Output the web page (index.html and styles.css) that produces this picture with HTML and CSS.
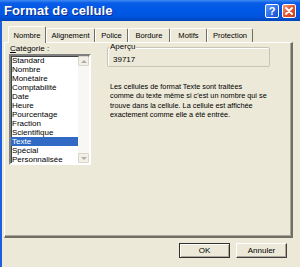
FILE: index.html
```html
<!DOCTYPE html>
<html lang="fr">
<head>
    <meta charset="UTF-8">
    <title>Format de cellule</title>
    <link rel="stylesheet" href="styles.css">
</head>
<body>
    <div class="window">
        <div class="titlebar">
            <span class="title">Format de cellule</span>
            <div class="caption-btns">
                <span class="cbtn help">?</span>
                <span class="cbtn close">
                    <svg width="8" height="8" viewBox="0 0 8 8"><path d="M1 1 L7 7 M7 1 L1 7" stroke="#fff" stroke-width="1.8" stroke-linecap="round"/></svg>
                </span>
            </div>
        </div>
        <div class="body">
            <div class="tabs">
                <span class="tab selected">Nombre</span>
                <span class="tab w-align">Alignement</span>
                <span class="tab w-police">Police</span>
                <span class="tab w-bordure">Bordure</span>
                <span class="tab w-motifs">Motifs</span>
                <span class="tab w-protect">Protection</span>
            </div>
            <div class="panel">
                <div class="col-left">
                    <div class="label"><u>C</u>atégorie :</div>
                    <div class="listbox">
                        <ul class="items">
                            <li>Standard</li>
                            <li>Nombre</li>
                            <li>Monétaire</li>
                            <li>Comptabilité</li>
                            <li>Date</li>
                            <li>Heure</li>
                            <li>Pourcentage</li>
                            <li>Fraction</li>
                            <li>Scientifique</li>
                            <li class="sel">Texte</li>
                            <li>Spécial</li>
                            <li>Personnalisée</li>
                        </ul>
                        <div class="vscroll">
                            <span class="sbtn"><span class="arrow up"></span></span>
                            <span class="track"></span>
                            <span class="sbtn"><span class="arrow down"></span></span>
                        </div>
                    </div>
                </div>
                <div class="col-right">
                    <fieldset class="group">
                        <legend>Aperçu</legend>
                        <div class="preview">39717</div>
                    </fieldset>
                    <p class="desc">Les cellules de format Texte sont traitées<br>comme du texte même si c'est un nombre qui se<br>trouve dans la cellule. La cellule est affichée<br>exactement comme elle a été entrée.</p>
                </div>
            </div>
            <div class="actions">
                <span class="btn default">OK</span>
                <span class="btn">Annuler</span>
            </div>
        </div>
    </div>
</body>
</html>
```

FILE: styles.css
```css
body {
    margin: 0;
    padding: 0;
    width: 300px;
    height: 267px;
    overflow: hidden;
    background: #ece9d8;
    font-family: "Liberation Sans", Arial, sans-serif;
    font-size: 8px;
    color: #000;
}

.window {
    width: 300px;
    height: 267px;
    display: flex;
    flex-direction: column;
}

/* barre de titre */
.titlebar {
    height: 21px;
    flex: none;
    display: flex;
    align-items: center;
    justify-content: space-between;
    padding: 0 4px 0 4px;
    box-sizing: border-box;
    background: linear-gradient(to bottom, #3d8cf2 0, #0a5ce8 3px, #0058e6 50%, #0054de 80%, #0044b8 100%);
}

.title {
    color: #fff;
    font-weight: bold;
    font-size: 13px;
    letter-spacing: 0.1px;
    text-shadow: 1px 1px 0 #0a2c8c;
}

.caption-btns {
    display: flex;
    gap: 3px;
}

.cbtn {
    width: 14px;
    height: 14px;
    box-sizing: border-box;
    border: 1px solid #fff;
    border-radius: 2px;
    display: flex;
    align-items: center;
    justify-content: center;
    color: #fff;
    font-weight: bold;
    font-size: 11px;
}

.help {
    background: linear-gradient(135deg, #5c9af6 0, #2a66e6 60%, #1b50cc 100%);
}

.close {
    background: linear-gradient(135deg, #f0a080 0, #e2552c 50%, #c8401c 100%);
}

/* contenu */
.body {
    flex: 1;
    border-left: 2px solid #1e5fe0;
    display: flex;
    flex-direction: column;
}

.tabs {
    display: flex;
    align-items: flex-end;
    height: 16px;
    margin-top: 5px;
    padding-left: 6px;
}

.tab {
    height: 14px;
    box-sizing: border-box;
    border-top: 1px solid #fff;
    border-left: 1px solid #fff;
    border-right: 1px solid #716f64;
    border-radius: 2px 2px 0 0;
    padding-top: 2px;
    text-align: center;
    line-height: 10px;
    font-size: 7.6px;
}

.tab.selected {
    width: 38px;
    height: 17px;
    margin-bottom: -1px;
    padding-top: 4px;
    background: #ece9d8;
    position: relative;
    z-index: 1;
}

.w-align { width: 49px; }
.w-police { width: 33px; }
.w-bordure { width: 42px; }
.w-motifs { width: 37px; }
.w-protect { width: 46px; }

.panel {
    width: 289px;
    height: 196px;
    box-sizing: border-box;
    margin-left: 2px;
    border-top: 1px solid #fff;
    border-left: 1px solid #fff;
    border-right: 2px solid #716f64;
    border-bottom: 2px solid #716f64;
    box-shadow: inset -1px -1px 0 #aca899;
    display: flex;
    padding: 0 0 0 4px;
}

.col-left {
    width: 82px;
}

.label {
    height: 11px;
    line-height: 11px;
    padding-left: 1px;
}

.listbox {
    width: 82px;
    height: 111px;
    box-sizing: border-box;
    border-top: 2px solid #808080;
    border-left: 2px solid #808080;
    border-right: 2px solid #fff;
    border-bottom: 2px solid #fff;
    box-shadow: inset 1px 1px 0 #404040;
    background: #fff;
    display: flex;
}

.items {
    list-style: none;
    margin: 0;
    padding: 0;
    flex: 1;
}

.items li {
    height: 9px;
    line-height: 9px;
    padding-left: 1px;
    white-space: nowrap;
}

.items li.sel {
    background: #316ac5;
    color: #fff;
}

.vscroll {
    width: 11px;
    display: flex;
    flex-direction: column;
}

.sbtn {
    height: 10px;
    box-sizing: border-box;
    border: 1px solid #d8d6cc;
    border-radius: 1px;
    background: #f1efe6;
    display: flex;
    align-items: center;
    justify-content: center;
}

.track {
    flex: 1;
    background: #f8f7f3;
}

.arrow {
    width: 0;
    height: 0;
    border-left: 3px solid transparent;
    border-right: 3px solid transparent;
}

.arrow.up {
    border-bottom: 3px solid #b0aea4;
}

.arrow.down {
    border-top: 3px solid #b0aea4;
}

.col-right {
    margin-left: 16px;
    width: 163px;
}

.group {
    margin: 0;
    padding: 0 0 2px 0;
    min-width: 0;
    border: 1px solid #c8c5b6;
    box-shadow: inset 1px 1px 0 #fff;
    border-radius: 2px;
}

.group legend {
    padding: 0 1px;
    margin-left: 1px;
    line-height: 8px;
    color: #000;
}

.preview {
    padding: 4px 0 0 5px;
    line-height: 9px;
}

.desc {
    margin: 15px 0 0 3px;
    font-size: 7.3px;
    line-height: 9.33px;
    white-space: nowrap;
}

/* boutons */
.actions {
    display: flex;
    justify-content: flex-end;
    gap: 6px;
    margin-top: 5px;
    padding-right: 13px;
}

.btn {
    width: 51px;
    height: 15px;
    box-sizing: border-box;
    border-top: 1px solid #fff;
    border-left: 1px solid #fff;
    border-right: 1px solid #404040;
    border-bottom: 1px solid #404040;
    box-shadow: inset -1px -1px 0 #aca899;
    text-align: center;
    line-height: 13px;
}

.btn.default {
    border: 1px solid #303030;
    box-shadow: inset 1px 1px 0 #fff, inset -1px -1px 0 #aca899;
}
```
